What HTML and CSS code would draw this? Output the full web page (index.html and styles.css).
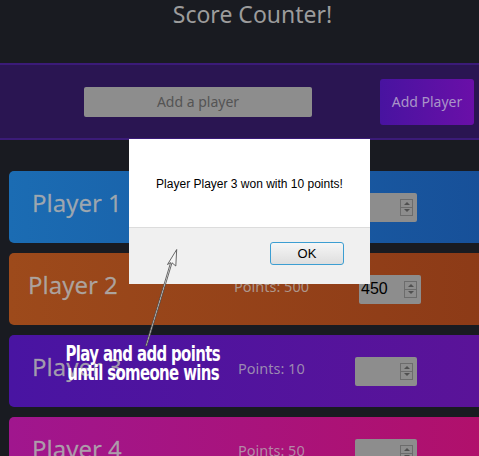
FILE: index.html
```html
<!DOCTYPE html>
<html>
<head>
<meta charset="utf-8">
<link rel="stylesheet" href="styles.css">
</head>
<body>
<header class="header">
  <h1 class="title">Score Counter!</h1>
</header>
<section class="band">
  <input class="name-input" type="text" placeholder="Add a player">
  <button class="add-btn">Add Player</button>
</section>
<main class="cards">
  <div class="card card-blue">
    <span class="pname">Player 1</span>
    <span class="points">Points: 400</span>
    <div class="numbox"><span class="numval"></span><span class="spin"><i class="up"></i><i class="down"></i></span></div>
  </div>
  <div class="card card-orange">
    <span class="pname pname-shift">Player 2</span>
    <span class="points points-shift">Points: 500</span>
    <div class="numbox numbox-shift"><span class="numval">450</span><span class="spin"><i class="up"></i><i class="down"></i></span></div>
  </div>
  <div class="card card-purple">
    <span class="pname">Player 3</span>
    <span class="points">Points: 10</span>
    <div class="numbox"><span class="numval"></span><span class="spin"><i class="up"></i><i class="down"></i></span></div>
  </div>
  <div class="card card-pink">
    <span class="pname">Player 4</span>
    <span class="points">Points: 50</span>
    <div class="numbox"><span class="numval"></span><span class="spin"><i class="up"></i><i class="down"></i></span></div>
  </div>
</main>

<div class="dialog">
  <div class="dialog-body">Player Player 3 won with 10 points!</div>
  <div class="dialog-foot"><button class="ok-btn">OK</button></div>
</div>

<svg class="arrow" width="479" height="456" viewBox="0 0 479 456">
  <path d="M176.7 249.5 L167.5 264.5 L170.6 262.6 L145.5 346 L146.8 346 L172 262.8 L175.8 266 Z" fill="#f4f4f4" stroke="#444" stroke-width="0.8" stroke-linejoin="miter"/>
</svg>
<div class="note"><span class="note-line">Play and add points</span><span class="note-line">until someone wins</span></div>
</body>
</html>
```

FILE: styles.css
```css
* { box-sizing: border-box; }
html, body {
  margin: 0;
  padding: 0;
  width: 479px;
  height: 456px;
  overflow: hidden;
  background: #191b21;
  font-family: "Noto Sans", "DejaVu Sans", sans-serif;
}
body { position: relative; }

.header {
  height: 63px;
  display: flex;
  justify-content: center;
}
.title {
  margin: 0;
  padding-left: 26px;
  font-size: 23px;
  font-weight: normal;
  line-height: 28px;
  color: #9c9c9c;
}

.band {
  height: 77px;
  background: #2a1552;
  border-top: 2px solid #3b1b78;
  border-bottom: 2px solid #3b1b78;
  display: flex;
  align-items: center;
  padding-left: 84px;
  gap: 68px;
}
.name-input {
  width: 228px;
  height: 30px;
  border: none;
  border-radius: 2px;
  background: #8d8d8d;
  text-align: center;
  font-family: "Noto Sans", "DejaVu Sans", sans-serif;
  font-size: 14px;
  color: #555;
}
.name-input::placeholder { color: #545454; }
.add-btn {
  width: 94px;
  height: 46px;
  border: none;
  border-radius: 3px;
  background: linear-gradient(90deg, #4813a0, #6a0fa8);
  color: #a994c8;
  font-family: "Noto Sans", "DejaVu Sans", sans-serif;
  font-size: 14px;
  padding: 0;
}

.cards {
  margin-top: 31px;
  padding-left: 9px;
  margin-right: -20px;
  display: flex;
  flex-direction: column;
  gap: 10px;
}
.card {
  height: 72px;
  border-radius: 5px;
  display: grid;
  grid-template-columns: 206px 117px 62px;
  align-items: center;
  padding-left: 23px;
}
.card-blue { background: linear-gradient(90deg, #1b6cb3, #174f98); }
.card-orange { background: linear-gradient(90deg, #9d4a1b, #8c3a17); }
.card-purple { background: linear-gradient(90deg, #4914a2, #5b1398); }
.card-pink { background: linear-gradient(90deg, #a0168e, #b1106a); }

.pname {
  font-size: 24px;
  color: rgba(175, 175, 175, 0.88);
  line-height: 30px;
  margin-top: -8px;
  -webkit-text-stroke: 0.3px rgba(175, 175, 175, 0.6);
}
.pname-shift { margin-left: -4px; }
.points {
  font-size: 14.5px;
  color: rgba(185, 185, 185, 0.72);
  margin-top: -6px;
}
.points-shift { margin-left: -4px; }
.numbox {
  width: 62px;
  height: 29px;
  background: #8d8d8d;
  border-radius: 2px;
  display: flex;
  align-items: center;
  justify-content: space-between;
  padding: 0 4px 0 2px;
}
.numbox-shift { margin-left: 4px; }
.numval {
  font-family: "Liberation Sans", Arial, sans-serif;
  font-size: 16px;
  color: #000;
}
.spin {
  width: 13px;
  height: 17px;
  border: 1px solid #6c6c6c;
  display: flex;
  flex-direction: column;
  justify-content: space-around;
  align-items: center;
  background: linear-gradient(#6c6c6c, #6c6c6c) center / 100% 1px no-repeat;
}
.spin .up, .spin .down {
  display: block;
  width: 0;
  height: 0;
  border-left: 3px solid transparent;
  border-right: 3px solid transparent;
}
.spin .up { border-bottom: 3px solid #505050; }
.spin .down { border-top: 3px solid #505050; }

.dialog {
  position: absolute;
  left: 129px;
  top: 139px;
  width: 241px;
  height: 145px;
  background: #f0f0f0;
  display: flex;
  flex-direction: column;
  font-family: "Liberation Sans", Arial, sans-serif;
}
.dialog-body {
  height: 89px;
  background: #fff;
  border-bottom: 1px solid #dcdcdc;
  display: flex;
  justify-content: center;
  padding-top: 38px;
  font-size: 12px;
  color: #000;
}
.dialog-foot {
  display: flex;
  justify-content: flex-end;
  padding: 14px 26px 0 0;
}
.ok-btn {
  width: 74px;
  height: 23px;
  border: 1px solid #3c9ed2;
  border-radius: 3px;
  background: linear-gradient(#f6f6f6, #dedede);
  font-family: "Liberation Sans", Arial, sans-serif;
  font-size: 13px;
  color: #000;
  padding: 0;
}

.arrow {
  position: absolute;
  left: 0;
  top: 0;
}
.note {
  position: absolute;
  left: 67px;
  top: 345px;
  width: 152px;
  display: flex;
  flex-direction: column;
  align-items: center;
  color: #fff;
  font-family: "DejaVu Sans", sans-serif;
  font-stretch: condensed;
  font-weight: bold;
  font-size: 21px;
  line-height: 19px;
  letter-spacing: -0.8px;
}
.note-line {
  white-space: nowrap;
  transform: scale(0.79, 1.05);
  transform-origin: center;
}
```
